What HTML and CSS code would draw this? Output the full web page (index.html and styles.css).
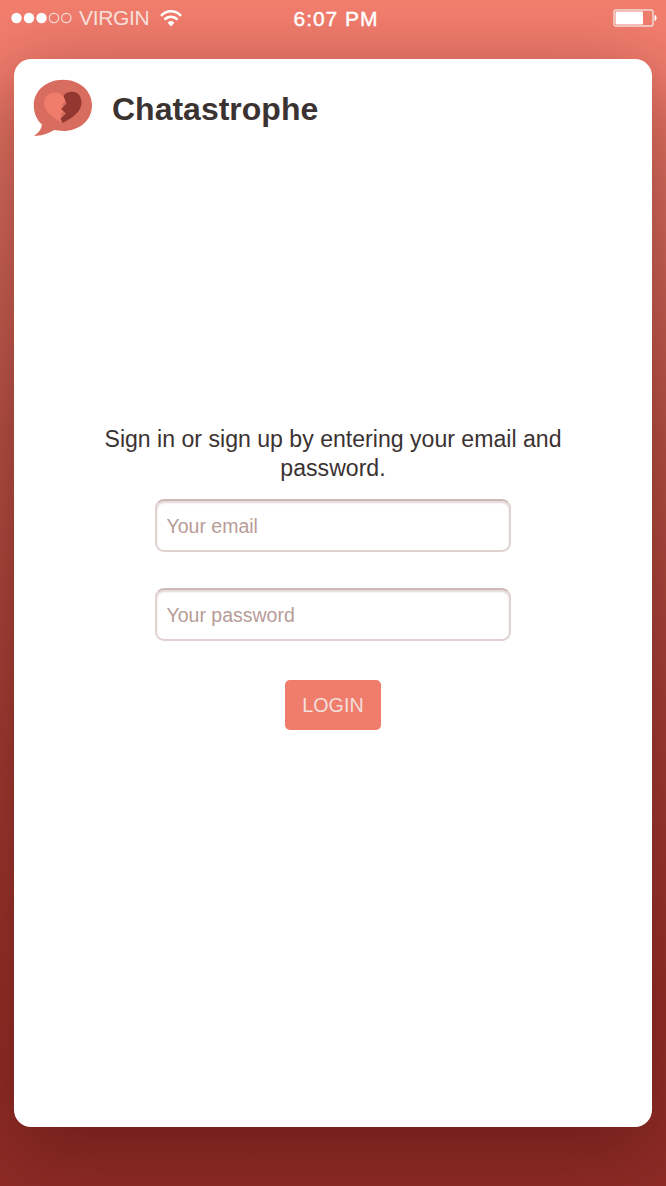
FILE: index.html
```html
<!DOCTYPE html>
<html lang="en">
<head>
<meta charset="utf-8">
<title>Chatastrophe</title>
<link rel="stylesheet" href="styles.css">
</head>
<body>
<div class="screen">
  <div class="status">
    <div class="carrier">
      <svg class="signal" width="62" height="12" viewBox="0 0 62 12">
        <g fill="#fff"><circle cx="5.5" cy="6" r="5.2"/><circle cx="18" cy="6" r="5.2"/><circle cx="30.5" cy="6" r="5.2"/></g>
        <g fill="none" stroke="#f5dcd7" stroke-width="1.2"><circle cx="43" cy="6" r="4.7"/><circle cx="55.3" cy="6" r="4.7"/></g>
      </svg>
      <span class="network">VIRGIN</span>
      <svg class="wifi" width="22" height="17" viewBox="0 0 22 17">
        <g fill="none" stroke="#fff" stroke-width="2.5"><path d="M1 5.800C6.800-.2 15.200-.2 21 5.800"/><path d="M4.400 9.700c3.900-3.900 9.300-3.900 13.200 0"/></g>
        <path d="M7.600 12.700c2-2.200 4.800-2.200 6.800 0L11 16.500z" fill="#fff"/>
      </svg>
    </div>
    <div class="time">6:07 PM</div>
    <svg class="battery" width="44" height="18" viewBox="0 0 44 18">
      <rect x="1" y="1" width="39" height="16" rx="2" fill="none" stroke="#f0dcd8" stroke-width="1.4"/>
      <rect x="2.5" y="2.5" width="27.5" height="13" rx="1" fill="#fff"/>
      <path d="M41.500 6c2.800.4 2.800 5.600 0 6z" fill="#fff"/>
    </svg>
  </div>
  <main class="card">
    <header class="header">
      <svg class="logo" width="60" height="58" viewBox="0 0 60 58">
        <path d="M30 .8C46.500.8 59 11.700 59 26.500S46.500 52 30 52c-3 0-6.500-.5-9-.9C15 55 8 57.500 1 56.600 6 53.500 8.500 50 8.800 45.500 3.500 40.500.8 34 .8 26.500.8 11.700 13.500.8 30 .8z" fill="#d86c5e"/>
        <path d="M28.500 43.500C21 39 11.200 33 11.200 24.500c0-7.500 5.500-11 10.800-11 4.500 0 7.200 2 8.500 4.500l2.800 3-5 5.300 4.600 4-5.500 5 3 4z" fill="#f07c6c"/>
        <path d="M30.500 17c1.500-3 4.500-4.200 8.500-4.200 6 0 9.500 4.500 9.500 11 0 8.500-9 15.500-19 20.200l-2-4.500 5.500-5-5-4.500 5.500-5.500z" fill="#923831"/>
      </svg>
      <h1 class="title">Chatastrophe</h1>
    </header>
    <form class="login">
      <p class="prompt">Sign in or sign up by entering your email and password.</p>
      <input class="field" type="text" placeholder="Your email">
      <input class="field" type="password" placeholder="Your password">
      <button class="submit" type="button">LOGIN</button>
    </form>
  </main>
</div>
</body>
</html>
```
FILE: styles.css
```css
* { box-sizing: border-box; }

body {
  margin: 0;
  font-family: "Liberation Sans", Arial, sans-serif;
  color: #3b3232;
}

.screen {
  height: 1186px;
  padding: 0 14px;
  overflow: hidden;
  background: linear-gradient(#f37e6e 0, #f07c6c 70px, #d86c5e 200px, #b95247 430px, #a33c34 730px, #962f29 1000px, #8e2b26 1186px);
}

.status {
  position: relative;
  z-index: 1;
  height: 59px;
  margin: 0 -4px;
  display: grid;
  grid-template-columns: 1fr auto 1fr;
  align-items: start;
  padding-top: 8px;
  color: #fff;
}

.carrier {
  display: flex;
  align-items: center;
  height: 20px;
}

.network {
  margin: 0 0 0 6px;
  font-size: 21px;
  line-height: 22px;
  letter-spacing: -0.35px;
  color: #f6e0dc;
}

.wifi { margin-left: 11px; }

.signal { margin-left: 1px; }

.time {
  padding-left: 6px;
  font-size: 21px;
  line-height: 21px;
  letter-spacing: 0.95px;
  -webkit-text-stroke: 0.4px #fff;
}

.battery {
  justify-self: end;
  margin: 1px -1px 0 0;
}

.card {
  height: 1068px;
  display: flex;
  flex-direction: column;
  background: #fff;
  border-radius: 17px;
  box-shadow: 0 20px 80px rgba(50, 6, 5, 0.42);
}

.header {
  display: flex;
  align-items: center;
  gap: 19px;
  height: 98px;
  padding: 0 19px;
}

.title {
  margin: 2px 0 0;
  font-size: 32px;
  line-height: 38px;
}

.login {
  display: flex;
  flex-direction: column;
  align-items: center;
  padding-top: 268px;
}

.prompt {
  width: 480px;
  margin: 0 0 17px;
  font-size: 23.1px;
  line-height: 28.500px;
  text-align: center;
}

.field {
  width: 356px;
  height: 53px;
  margin: 0 0 36px;
  padding: 2px 9.500px 0;
  border: 2px solid #e0d2d0;
  border-top-color: #cdbab7;
  border-radius: 9px;
  background: #fff;
  box-shadow: inset 0 2px 2px #e3d8d6;
  font-family: inherit;
  font-size: 19.500px;
}

.field::placeholder {
  color: #b79c98;
  opacity: 1;
}

.submit {
  width: 96px;
  height: 50px;
  margin-top: 3px;
  padding: 0;
  border: 0;
  border-radius: 5px;
  background: #f07c6c;
  color: #f3dedb;
  font-family: inherit;
  font-size: 19.700px;
}
```
